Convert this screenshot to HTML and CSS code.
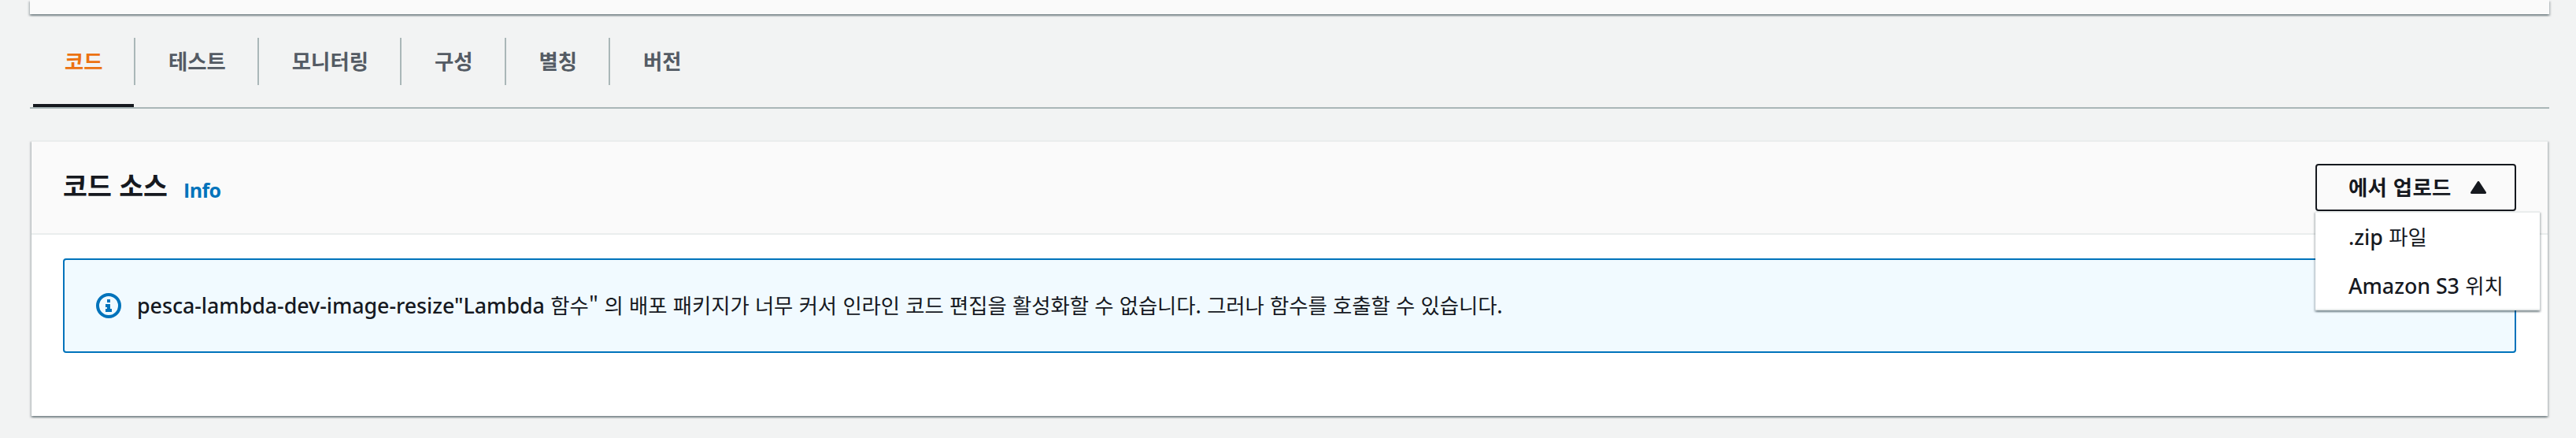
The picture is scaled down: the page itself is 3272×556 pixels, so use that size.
FILE: index.html
```html
<!DOCTYPE html>
<html lang="ko">
<head>
<meta charset="utf-8">
<title>Lambda</title>
<link rel="stylesheet" href="styles.css">
</head>
<body>
<section class="panel-above"></section>
<nav class="tabs">
  <a class="tab active">코드</a>
  <a class="tab">테스트</a>
  <a class="tab">모니터링</a>
  <a class="tab">구성</a>
  <a class="tab">별칭</a>
  <a class="tab">버전</a>
</nav>
<main class="panel">
  <header class="panel-header">
    <h2 class="title">코드 소스</h2>
    <a class="info">Info</a>
    <div class="dropdown">
      <button class="button">에서 업로드<svg class="caret" viewBox="0 0 20 16"><path d="M10 1.5 18.5 14.5H1.5Z" fill="currentColor" stroke="currentColor" stroke-width="3" stroke-linejoin="round"/></svg></button>
      <ul class="menu">
        <li class="item"><span class="latin">.zip</span> <span>파일</span></li>
        <li class="item"><span class="latin">Amazon S3</span> <span>위치</span></li>
      </ul>
    </div>
  </header>
  <div class="alert">
    <svg class="icon" viewBox="0 0 32 32"><circle cx="16" cy="16" r="14" fill="none" stroke="currentColor" stroke-width="4"/><path d="M14 8h4v4h-4zM12 14h6v6h2v4h-8v-4h2v-2h-2z" fill="currentColor"/></svg>
    <p class="message"><span class="latin">pesca-lambda-dev-image-resize"Lambda</span> <span class="hangul">함수" 의 배포 패키지가 너무 커서 인라인 코드 편집을 활성화할 수 없습니다. 그러나 함수를 호출할 수 있습니다.</span></p>
  </div>
</main>
</body>
</html>
```
FILE: styles.css
```css
* { box-sizing: border-box; }
body {
  margin: 0;
  height: 556px;
  overflow: hidden;
  background: #f2f3f3;
  color: #16191f;
  font: 26.4px/44px "Noto Sans CJK KR", sans-serif;
}
.panel-above, .panel, .menu {
  box-shadow: 0 2px 2px rgba(0,28,36,.3), 2px 2px 2px rgba(0,28,36,.15), -2px 2px 2px rgba(0,28,36,.15);
}
.panel-above { height: 18px; margin: 0 34px 0 38px; background: #fafafa; }

.tabs {
  display: flex;
  height: 120px;
  margin: 0 34px 0 38px;
  padding: 30px 0 0 4px;
  border-bottom: 2px solid #aab7b8;
}
.tab {
  height: 60px;
  padding: 0 40px 0 42px;
  border-right: 2px solid #aab7b8;
  line-height: 58px;
  font-weight: 700;
  color: #545b64;
}
.tab:last-child { border-right: 0; }
.tab.active {
  position: relative;
  width: 128px;
  height: 88px;
  padding: 0 0 0 40px;
  border-right: 0;
  border-bottom: 4px solid #16191f;
  color: #ec7211;
}
.active::after {
  content: "";
  position: absolute;
  left: 128px;
  top: 0;
  width: 2px;
  height: 60px;
  background: #aab7b8;
}
.active + .tab { margin-left: 2px; }

.panel {
  height: 350px;
  margin: 40px 36px 0 40px;
  background: #fff;
  border-top: 2px solid #eaeded;
}
.panel-header {
  display: flex;
  height: 118px;
  padding: 28px 40px 0;
  background: #fafafa;
  border-bottom: 2px solid #eaeded;
}
.title { margin: 0; font-size: 33.6px; line-height: 54px; }
.info {
  margin-left: 20px;
  color: #0073bb;
  font: 700 25px/66px "Open Sans", sans-serif;
  letter-spacing: -.6px;
}
.dropdown { position: relative; margin-left: auto; width: 255px; }
.button {
  display: flex;
  align-items: center;
  width: 255px;
  height: 60px;
  padding: 0 36px 2px 40px;
  border: 2px solid #16191f;
  border-radius: 4px;
  background: #fafafa;
  color: #16191f;
  font: 700 26.4px/54px "Noto Sans CJK KR", sans-serif;
  letter-spacing: .3px;
}
.caret { width: 20px; height: 16px; margin: 2px 0 0 auto; }
.menu {
  position: absolute;
  left: 0;
  top: 60px;
  width: 285px;
  height: 126px;
  margin: 0;
  padding: 0;
  list-style: none;
  background: #fff;
  border: 2px solid #eaeded;
  border-width: 2px 0;
}
.item { height: 62px; padding-left: 42px; line-height: 60px; white-space: nowrap; }
.latin { font-family: "Noto Sans", sans-serif; font-weight: 500; font-size: 26.8px; letter-spacing: -.04px; }
.hangul { letter-spacing: -.07px; }

.alert {
  display: flex;
  align-items: center;
  height: 120px;
  margin: 30px 40px 0;
  padding: 0 40px;
  background: #f1faff;
  border: 2px solid #0073bb;
  border-radius: 4px;
}
.icon { width: 32px; height: 32px; color: #0073bb; }
.message { margin: 0 0 2px 20px; white-space: nowrap; }
```
